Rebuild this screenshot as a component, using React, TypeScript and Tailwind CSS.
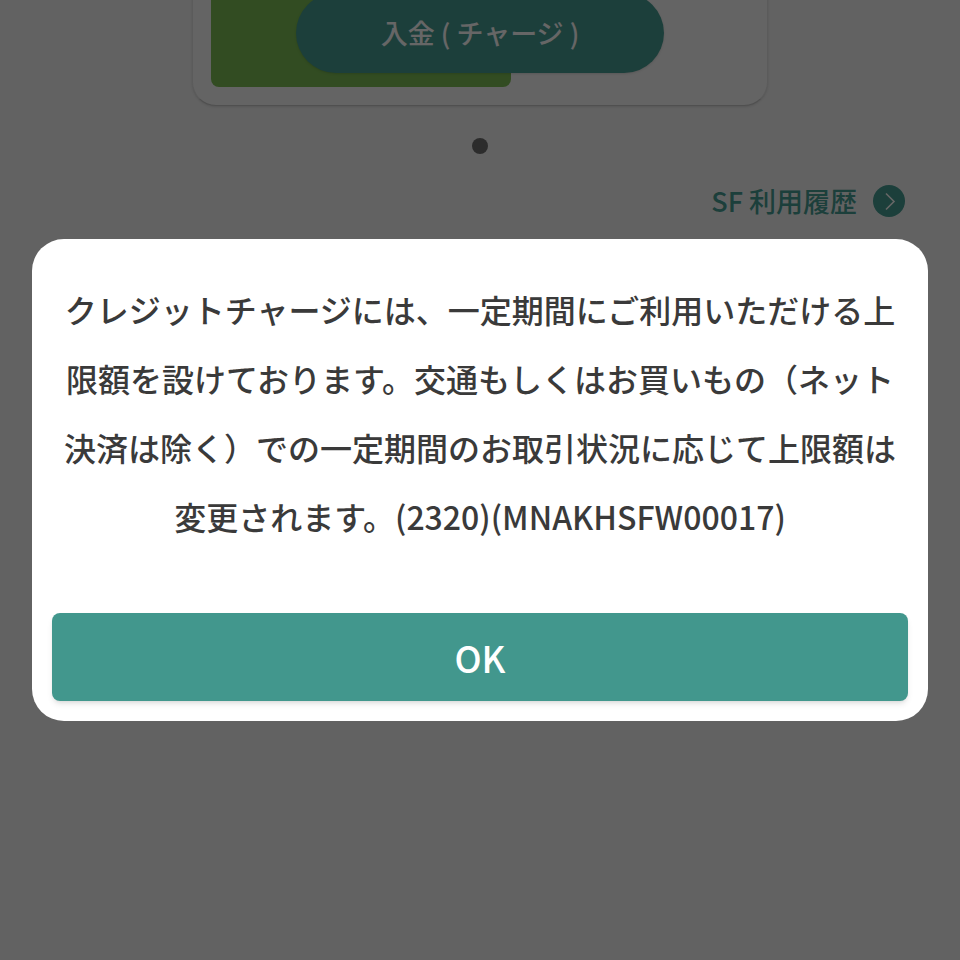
import { useState } from 'react';

const MESSAGE =
  'クレジットチャージには、一定期間にご利用いただける上限額を設けております。交通もしくはお買いもの（ネット決済は除く）での一定期間のお取引状況に応じて上限額は変更されます。(2320)(MNAKHSFW00017)';

function ChargeCard() {
  return (
    <section className="relative -mt-16 w-3/5 h-[170px] p-[18px] rounded-3xl bg-[#fafafa] border border-[#e4e4e4] border-b-[#c8c8c8] shadow-sm">
      <div className="w-[300px] h-full rounded-lg bg-[#7dbe55]" />
      <button
        type="button"
        className="absolute inset-x-[103px] bottom-8 h-20 rounded-full bg-[#469d93] text-white text-[27px] leading-10 shadow-sm"
      >
        入金 ( チャージ )
      </button>
    </section>
  );
}

function HistoryLink() {
  return (
    <a href="#history" className="flex items-center self-end gap-4 mt-[27px] mr-[55px] text-[27px] leading-10 text-[#469d93]">
      SF 利用履歴
      <svg viewBox="0 0 32 32" className="w-8 h-8" aria-hidden="true">
        <circle cx="16" cy="16" r="16" fill="#469d93" />
        <path d="M13 8.5l8 8-8 8" fill="none" stroke="#fff" strokeWidth="1.6" />
      </svg>
    </a>
  );
}

interface DialogProps {
  onClose: () => void;
}

function LimitDialog({ onClose }: DialogProps) {
  return (
    <div className="fixed inset-0 z-10 flex items-center justify-center p-8 bg-black/60">
      <div
        role="alertdialog"
        aria-modal="true"
        aria-describedby="limit-message"
        className="w-full rounded-[32px] bg-white px-5 pt-9 pb-5"
      >
        <p id="limit-message" className="px-3 text-center text-[32px] leading-[69px] break-all text-[#3a3a3a]">
          {MESSAGE}
        </p>
        <button
          type="button"
          onClick={onClose}
          className="mt-[62px] w-full h-[88px] rounded-lg bg-[#42978d] text-white text-[36px] leading-[56px] shadow-md"
        >
          OK
        </button>
      </div>
    </div>
  );
}

export default function App() {
  const [open, setOpen] = useState(true);

  return (
    <div
      lang="ja"
      className="min-h-screen flex flex-col items-center overflow-hidden bg-[#f5f5f5] font-['Noto_Sans_CJK_JP',sans-serif] font-medium"
    >
      <ChargeCard />
      <div className="mt-8 w-4 h-4 rounded-full bg-[#6e6e6e]" />
      <HistoryLink />
      {open && <LimitDialog onClose={() => setOpen(false)} />}
    </div>
  );
}
